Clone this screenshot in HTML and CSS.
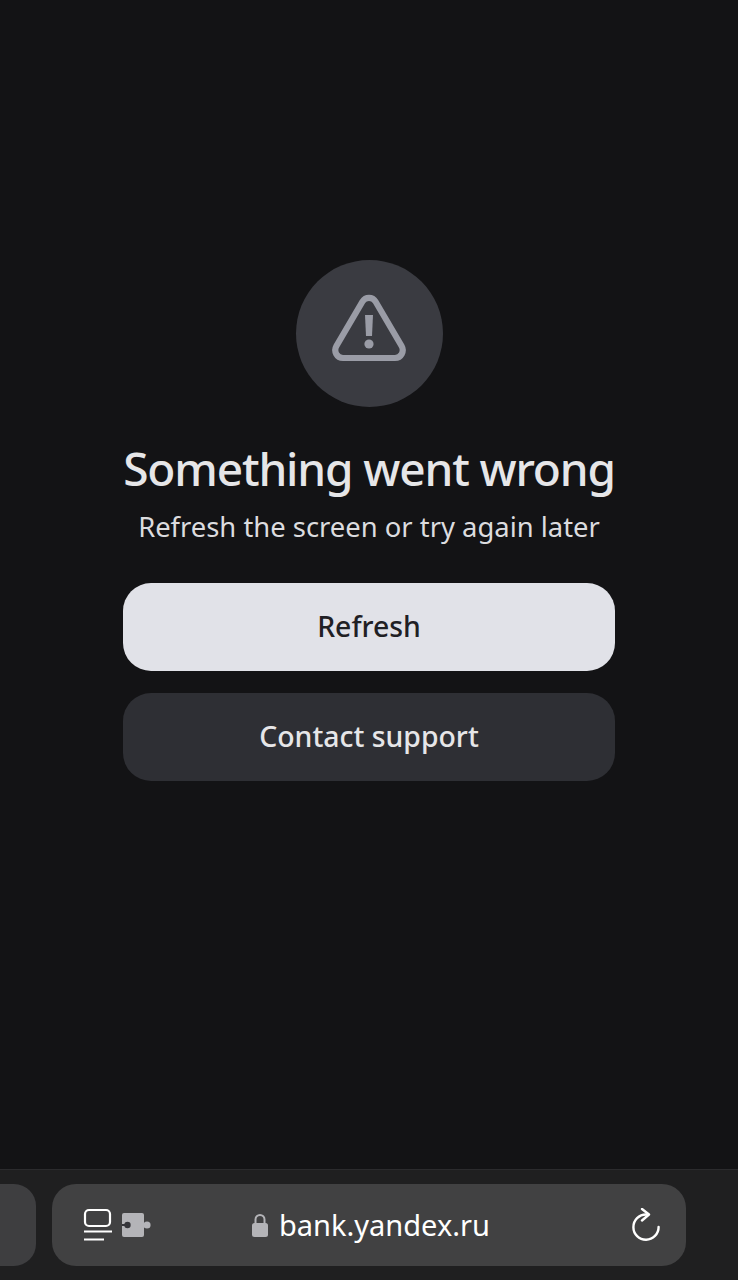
FILE: index.html
```html
<!DOCTYPE html>
<html lang="en">
<head>
    <meta charset="UTF-8">
    <meta name="viewport" content="width=device-width, initial-scale=1.0">
    <title>Something went wrong</title>
    <link rel="stylesheet" href="styles.css">
</head>
<body>
    <div class="page">
        <div class="error_box">
            <div class="error_icon">
                <svg class="warn" width="76" height="68" viewBox="0 0 76 68" fill="none">
                    <path d="M31.5 7.5 C34.5 2.6 41.5 2.6 44.5 7.5 L70.6 52 C73.6 57.2 70.2 64 64 64 L12 64 C5.8 64 2.4 57.2 5.4 52 Z" stroke="#9a9ca6" stroke-width="6.2" stroke-linejoin="round"/>
                    <path d="M34 21 L42 21 L41 42 L35 42 Z" fill="#9a9ca6"/>
                    <circle cx="38" cy="50" r="4.6" fill="#9a9ca6"/>
                </svg>
            </div>
            <h1 class="title">Something went wrong</h1>
            <p class="subtitle">Refresh the screen or try again later</p>
            <button class="btn btn_main">Refresh</button>
            <button class="btn btn_second">Contact support</button>
        </div>
    </div>
    <div class="browser_bar">
        <div class="tab_prev"></div>
        <div class="address">
            <div class="address_left">
                <svg width="30" height="34" viewBox="0 0 30 34" fill="none">
                    <rect x="2" y="2" width="25" height="16" rx="4" stroke="#fff" stroke-width="2.2"/>
                    <path d="M1 23.5 H29 M1 31.5 H21" stroke="#fff" stroke-width="2.2"/>
                </svg>
                <svg width="30" height="24" viewBox="0 0 30 24">
                    <path d="M3 0 H21 A2 2 0 0 1 23 2 V22 A2 2 0 0 1 21 24 H3 A2 2 0 0 1 1 22 V2 A2 2 0 0 1 3 0 Z" fill="#b4b4b8"/>
                    <path d="M22 12 H26" stroke="#b4b4b8" stroke-width="3"/>
                    <circle cx="26" cy="12" r="3.6" fill="#b4b4b8"/>
                    <path d="M1 12 H6" stroke="#35353a" stroke-width="2"/>
                    <circle cx="6.5" cy="12" r="3.2" fill="#35353a"/>
                </svg>
            </div>
            <div class="address_url">
                <svg width="18" height="25" viewBox="0 0 18 25" fill="none">
                    <path d="M4.5 11 V6.5 A4.5 4.5 0 0 1 13.5 6.5 V11" stroke="#b4b4b8" stroke-width="2"/>
                    <rect x="1" y="10" width="16" height="14" rx="2.5" fill="#b4b4b8"/>
                </svg>
                <span class="url_text">bank.yandex.ru</span>
            </div>
            <svg class="reload" width="30" height="34" viewBox="0 0 30 34" fill="none">
                <path d="M15 6.5 A12.6 12.6 0 1 0 27.6 19" stroke="#fff" stroke-width="2.4" stroke-linecap="round"/>
                <path d="M11 1 L18 6.5 L11 12.5" stroke="#fff" stroke-width="2.4" stroke-linecap="round" stroke-linejoin="round"/>
            </svg>
        </div>
    </div>
</body>
</html>
```

FILE: styles.css
```css
*{
  box-sizing: border-box;
}
body{
  margin: 0;
  height: 1280px;
  overflow: hidden;
  display: flex;
  flex-direction: column;
  background-color: #131315;
  font-family: "Noto Sans", "Liberation Sans", sans-serif;
}
.page{
  height: 1169px;
  padding-top: 260px;
  display: flex;
  justify-content: center;
}
.error_box{
  width: 492px;
  display: flex;
  flex-direction: column;
  align-items: center;
}
.error_icon{
  width: 147px;
  height: 147px;
  border-radius: 50%;
  background-color: #3a3b41;
  display: flex;
  justify-content: center;
  align-items: center;
  margin-bottom: 31px;
}
.warn{
  margin-bottom: 12px;
}
.title{
  margin: 0 0 11px;
  font-size: 46px;
  line-height: 60px;
  font-weight: 500;
  letter-spacing: -1.15px;
  white-space: nowrap;
  color: #e6e6e8;
}
.subtitle{
  margin: 0 0 38px;
  font-size: 27.4px;
  line-height: 36px;
  font-weight: 400;
  white-space: nowrap;
  color: #dcdcdf;
}
.btn{
  width: 100%;
  height: 88px;
  flex-shrink: 0;
  border: none;
  border-radius: 28px;
  padding: 0 0 2px;
  font-family: inherit;
  font-size: 28.4px;
  font-weight: 500;
}
.btn_main{
  background-color: #e1e2e8;
  color: #1f2024;
  margin-bottom: 22px;
}
.btn_second{
  background-color: #2e2f34;
  color: #e6e6e8;
}
.browser_bar{
  height: 111px;
  border-top: 1px solid #2b2b2d;
  background-color: #1f1f20;
  padding-top: 14px;
  display: flex;
  gap: 16px;
}
.tab_prev{
  width: 36px;
  height: 82px;
  background-color: #3e3e40;
  border-radius: 0 22px 22px 0;
}
.address{
  position: relative;
  width: 634px;
  height: 82px;
  background-color: #414142;
  border-radius: 24px;
  display: flex;
  align-items: center;
  justify-content: space-between;
  padding: 0 25px 0 31px;
}
.address_left{
  display: flex;
  align-items: center;
  gap: 8px;
}
.address_url{
  position: absolute;
  left: 199px;
  top: 0;
  height: 82px;
  display: flex;
  align-items: center;
  gap: 10px;
  font-size: 29px;
  color: #fff;
}
.url_text{
  margin-bottom: 2px;
}
```
